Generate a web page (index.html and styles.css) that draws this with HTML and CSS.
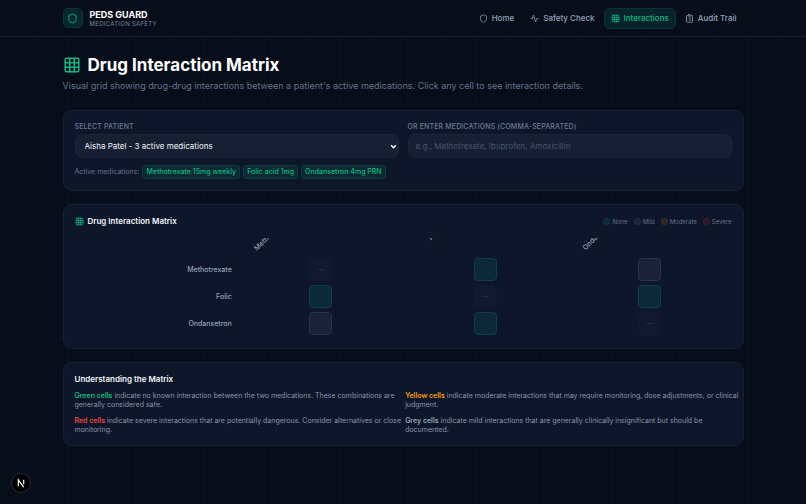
FILE: index.html
```html
<!DOCTYPE html>
<html lang="en">
<head>
<meta charset="UTF-8">
<meta name="viewport" content="width=device-width, initial-scale=1.0">
<title>Drug Interaction Matrix - Peds Guard</title>
<link rel="stylesheet" href="styles.css">
</head>
<body>
<svg class="sprite" aria-hidden="true">
  <symbol id="shield" viewBox="0 0 24 24"><path d="M20 13c0 5-3.5 7.500-7.660 8.950a1 1 0 0 1-.67-.01C7.500 20.500 4 18 4 13V6a1 1 0 0 1 1-1c2 0 4.500-1.200 6.240-2.720a1.170 1.170 0 0 1 1.520 0C14.510 3.810 17 5 19 5a1 1 0 0 1 1 1z"/></symbol>
  <symbol id="activity" viewBox="0 0 24 24"><path d="M22 12h-4l-3 9L9 3l-3 9H2"/></symbol>
  <symbol id="grid" viewBox="0 0 24 24"><rect x="3" y="3" width="18" height="18" rx="2"/><path d="M3 9h18M3 15h18M9 3v18M15 3v18"/></symbol>
  <symbol id="clipboard" viewBox="0 0 24 24"><rect x="8" y="2" width="8" height="4" rx="1"/><path d="M16 4h2a2 2 0 0 1 2 2v14a2 2 0 0 1-2 2H6a2 2 0 0 1-2-2V6a2 2 0 0 1 2-2h2M12 11h4M12 16h4M8 11h.01M8 16h.01"/></symbol>
</svg>

<header class="header">
  <div class="container header-inner">
    <a class="brand" href="#">
      <span class="brand-logo"><svg class="icon icon-md"><use href="#shield"/></svg></span>
      <span>
        <span class="brand-name">PEDS GUARD</span>
        <span class="brand-tag">MEDICATION SAFETY</span>
      </span>
    </a>
    <nav class="nav">
      <a class="nav-link" href="#"><svg class="icon"><use href="#shield"/></svg>Home</a>
      <a class="nav-link" href="#"><svg class="icon"><use href="#activity"/></svg>Safety Check</a>
      <a class="nav-link active" href="#"><svg class="icon"><use href="#grid"/></svg>Interactions</a>
      <a class="nav-link" href="#"><svg class="icon"><use href="#clipboard"/></svg>Audit Trail</a>
    </nav>
  </div>
</header>

<main class="container main">
  <div class="page-head">
    <h1><svg class="icon icon-lg"><use href="#grid"/></svg>Drug Interaction Matrix</h1>
    <p>Visual grid showing drug-drug interactions between a patient's active medications. Click any cell to see interaction details.</p>
  </div>

  <section class="card">
    <div class="fields">
      <div class="field">
        <label for="patient">SELECT PATIENT</label>
        <div class="select-wrap">
          <select id="patient" class="control">
            <option>Aisha Patel - 3 active medications</option>
          </select>
          <svg class="select-arrow" viewBox="0 0 6 6"><path d="M1 2l2 2 2-2"/></svg>
        </div>
      </div>
      <div class="field">
        <label for="meds">OR ENTER MEDICATIONS (COMMA-SEPARATED)</label>
        <input type="text" id="meds" class="control" placeholder="e.g., Methotrexate, Ibuprofen, Amoxicillin">
      </div>
    </div>
    <div class="active-meds">
      <span class="active-label">Active medications:</span>
      <span class="pill">Methotrexate 15mg weekly</span>
      <span class="pill">Folic acid 1mg</span>
      <span class="pill">Ondansetron 4mg PRN</span>
    </div>
  </section>

  <section class="card">
    <div class="card-head">
      <h2><svg class="icon"><use href="#grid"/></svg>Drug Interaction Matrix</h2>
      <div class="legend">
        <span class="legend-item"><i class="dot none"></i>None</span>
        <span class="legend-item"><i class="dot mild"></i>Mild</span>
        <span class="legend-item"><i class="dot moderate"></i>Moderate</span>
        <span class="legend-item"><i class="dot severe"></i>Severe</span>
      </div>
    </div>
    <div class="matrix-scroll">
      <table class="matrix">
        <thead>
          <tr>
            <td></td>
            <th scope="col"><span>Methotrexate</span></th>
            <th scope="col"><span>Folic</span></th>
            <th scope="col"><span>Ondansetron</span></th>
          </tr>
        </thead>
        <tbody>
          <tr>
            <th scope="row">Methotrexate</th>
            <td><button class="cell self" disabled>—</button></td>
            <td><button class="cell none" aria-label="None"></button></td>
            <td><button class="cell mild" aria-label="Mild"></button></td>
          </tr>
          <tr>
            <th scope="row">Folic</th>
            <td><button class="cell none" aria-label="None"></button></td>
            <td><button class="cell self" disabled>—</button></td>
            <td><button class="cell none" aria-label="None"></button></td>
          </tr>
          <tr>
            <th scope="row">Ondansetron</th>
            <td><button class="cell mild" aria-label="Mild"></button></td>
            <td><button class="cell none" aria-label="None"></button></td>
            <td><button class="cell self" disabled>—</button></td>
          </tr>
        </tbody>
      </table>
    </div>
  </section>

  <section class="card card-notes">
    <h2>Understanding the Matrix</h2>
    <div class="notes">
      <p><strong class="green">Green cells</strong> indicate no known interaction between the two medications. These combinations are generally considered safe.</p>
      <p><strong class="yellow">Yellow cells</strong> indicate moderate interactions that may require monitoring, dose adjustments, or clinical judgment.</p>
      <p><strong class="red">Red cells</strong> indicate severe interactions that are potentially dangerous. Consider alternatives or close monitoring.</p>
      <p><strong class="grey">Grey cells</strong> indicate mild interactions that are generally clinically insignificant but should be documented.</p>
    </div>
  </section>
</main>

<button class="dev-badge" aria-label="Open dev tools">
  <svg viewBox="0 0 20 20"><path d="M7 13.500V6.500L13 14.500" /><path d="M13 6.500v5"/></svg>
</button>
</body>
</html>
```
FILE: styles.css
```css
* {
  box-sizing: border-box;
  margin: 0;
  padding: 0;
}
body {
  min-height: 100vh;
  font-family: Inter, sans-serif;
  font-size: 8px;
  color: #f1f5f9;
  background-color: #080d1a;
  background-image:
    linear-gradient(to right, rgba(20, 184, 166, 0.03) 1px, transparent 1px),
    linear-gradient(to bottom, rgba(20, 184, 166, 0.03) 1px, transparent 1px);
  background-size: 34px 34px;
  background-position: -1px -1px;
}
a {
  color: inherit;
  text-decoration: none;
}
.sprite {
  display: none;
}
.container {
  width: calc(100% - 28px);
  max-width: 681px;
  margin: 0 auto;
}
.icon {
  width: 9px;
  height: 9px;
  flex: none;
  fill: none;
  stroke: currentColor;
  stroke-width: 2;
  stroke-linecap: round;
  stroke-linejoin: round;
}
.icon-md {
  width: 11px;
  height: 11px;
}
.icon-lg {
  width: 18px;
  height: 18px;
}

/* Header */
.header {
  background: #080d1a;
  border-bottom: 1px solid #182132;
}
.header-inner {
  display: flex;
  align-items: center;
  justify-content: space-between;
  height: 36px;
}
.brand {
  display: flex;
  align-items: center;
  gap: 7px;
}
.brand-logo {
  display: flex;
  align-items: center;
  justify-content: center;
  width: 20px;
  height: 20px;
  border: 1px solid #0b3638;
  border-radius: 5px;
  background: #08262d;
  color: #10b981;
}
.brand-name, .brand-tag {
  display: block;
}
.brand-name {
  font-size: 9px;
  line-height: 10px;
  font-weight: 700;
  color: #fff;
}
.brand-tag {
  font-size: 6px;
  line-height: 7px;
  letter-spacing: 0.05em;
  color: #7587a0;
}
.nav {
  display: flex;
  gap: 2px;
}
.nav-link {
  display: flex;
  align-items: center;
  gap: 4px;
  height: 21px;
  padding: 0 6px;
  border: 1px solid transparent;
  border-radius: 5px;
  font-weight: 500;
  color: #94a3b8;
}
.nav-link.active {
  border-color: #0b3236;
  background: #08232c;
  color: #10b981;
}

/* Page title */
.main {
  display: grid;
  gap: 13px;
  padding: 18px 0;
}
.page-head {
  padding-bottom: 4px;
}
.page-head h1 {
  display: flex;
  align-items: center;
  gap: 7px;
  font-size: 17px;
  line-height: 20px;
  font-weight: 700;
  color: #fff;
}
.page-head h1 .icon, .card-head .icon {
  color: #10b981;
}
.page-head p {
  margin-top: 4px;
  font-size: 9px;
  line-height: 14px;
  color: #64748b;
}

/* Cards */
.card {
  padding: 11px;
  border: 1px solid #172135;
  border-radius: 9px;
  background: #0e1629;
}
.card h2 {
  display: flex;
  align-items: center;
  gap: 4px;
  font-size: 8px;
  line-height: 11px;
  font-weight: 600;
}
.fields {
  display: grid;
  grid-template-columns: 1fr 1fr;
  gap: 9px;
}
.field label {
  display: block;
  margin-bottom: 3px;
  font-size: 7px;
  line-height: 9px;
  font-weight: 500;
  letter-spacing: 0.02em;
  color: #6b7b92;
}
.control {
  display: block;
  width: 100%;
  height: 24px;
  padding: 0 7px;
  border: 1px solid #1a2538;
  border-radius: 7px;
  background: #162032;
  font-family: inherit;
  font-size: 8px;
  color: #f1f5f9;
}
.select-wrap {
  position: relative;
}
select.control {
  padding: 0 14px 0 9px;
  appearance: none;
}
.select-arrow {
  position: absolute;
  top: 9px;
  right: 2px;
  width: 7px;
  height: 7px;
  fill: none;
  stroke: #fff;
  stroke-width: 1.3;
  pointer-events: none;
}
.control::placeholder {
  color: #475569;
}
.active-meds {
  display: flex;
  flex-wrap: wrap;
  align-items: center;
  gap: 3px;
  margin-top: 7px;
  font-size: 7px;
  line-height: 8px;
}
.active-label {
  color: #64748b;
}
.pill {
  padding: 2px 3px;
  border: 1px solid #0b3c40;
  border-radius: 3px;
  background: #0b2a34;
  font-weight: 500;
  color: #10b981;
}

/* Matrix */
.card-head {
  display: flex;
  align-items: center;
  justify-content: space-between;
}
.legend {
  display: flex;
  gap: 6px;
  font-size: 6px;
  color: #64748b;
}
.legend-item {
  display: flex;
  align-items: center;
  gap: 2px;
}
.dot {
  width: 7px;
  height: 7px;
  border: 1px solid;
  border-radius: 50%;
}
.none {
  border-color: #0f3f45;
  background: #0c2a35;
}
.mild {
  border-color: #2a3447;
  background: #1a2336;
}
.moderate {
  border-color: #4a3320;
  background: #2b2427;
}
.severe {
  border-color: #45202f;
  background: #291a2b;
}
.matrix-scroll {
  margin-top: 11px;
  overflow: hidden;
}
.matrix {
  width: 100%;
  table-layout: fixed;
  border-collapse: collapse;
}
.matrix th {
  font-size: 7px;
  line-height: 9px;
  font-weight: 500;
  color: #94a3b8;
}
.matrix thead th {
  height: 18px;
}
.matrix thead span {
  display: block;
  transform: translate(-26px, 44px) rotate(-45deg);
  transform-origin: left center;
}
.matrix tbody th {
  padding-right: 7px;
  text-align: right;
}
.matrix tbody td {
  height: 27px;
  text-align: center;
}
.cell {
  display: block;
  width: 23px;
  height: 23px;
  margin: 0 auto;
  border-width: 1px;
  border-style: solid;
  border-radius: 4px;
  font-family: inherit;
  font-size: 7px;
}
.self {
  border-color: #111a2c;
  background: #111a2c;
  color: #2a374b;
}

/* Notes */
.card-notes {
  padding-right: 2px;
}
.notes {
  display: grid;
  grid-template-columns: 70fr 71fr;
  row-gap: 7px;
  margin-top: 6px;
  font-size: 7px;
  line-height: 9px;
  color: #8695ab;
}
.notes strong {
  font-weight: 600;
}
.green {
  color: #10b981;
}
.yellow {
  color: #f59e0b;
}
.red {
  color: #ef4444;
}
.grey {
  color: #94a3b8;
}

.dev-badge {
  position: fixed;
  left: 11px;
  bottom: 11px;
  width: 20px;
  height: 20px;
  border: 1px solid #2a2d33;
  border-radius: 50%;
  background: #000;
}
.dev-badge svg {
  display: block;
  width: 18px;
  height: 18px;
  fill: none;
  stroke: #fff;
  stroke-width: 1.3;
}
```
